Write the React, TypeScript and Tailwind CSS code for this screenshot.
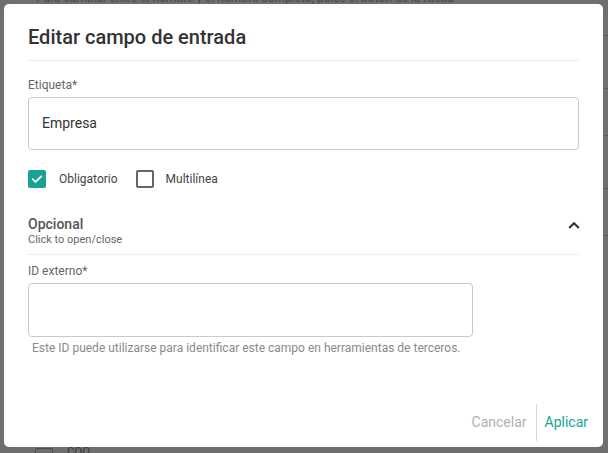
import React from "react";

export default function App() {
  const font = { fontFamily: "Roboto, 'Noto Sans', sans-serif" };
  return (
    <div className="relative w-[608px] h-[453px] overflow-hidden bg-[#6f6f6f]" style={font}>
      {/* background page (dimmed) */}
      <div className="absolute inset-0">
        <div className="absolute left-[36px] top-[-11px] text-[12px] text-[#4a4a4a] whitespace-nowrap">
          Para cambiar entre el nombre y el nombre completo, pulse el botón de la rueda
        </div>
        <div className="absolute right-0 top-[35px] w-[10px] h-px bg-[#5c5c5c]" />
        <div className="absolute right-0 top-[88px] w-[10px] h-px bg-[#5c5c5c]" />
        <div className="absolute right-0 top-[135px] w-[10px] h-px bg-[#5c5c5c]" />
        <div className="absolute right-0 top-[188px] w-[10px] h-px bg-[#5c5c5c]" />
        <div className="absolute right-0 top-[235px] w-[10px] h-px bg-[#5c5c5c]" />
        <div className="absolute left-[35px] top-[448px] w-[18px] h-[18px] border border-[#4a4a4a] rounded-[2px]" />
        <div className="absolute left-[67px] top-[440px] text-[14px] text-[#3f3f3f]">coo</div>
      </div>

      {/* modal */}
      <div className="absolute left-[4px] top-[4px] w-[599px] h-[443px] bg-white rounded-[5px] flex flex-col">
        <div className="px-6">
          <div className="pt-[19px] pb-[9px] border-b border-[#ececec]">
            <h1 className="text-[20px] leading-[28px] font-medium text-[#333]">Editar campo de entrada</h1>
          </div>

          <div className="mt-[16px] text-[12px] leading-[16px] text-[#666]">Etiqueta*</div>
          <div className="mt-[4px] h-[53px] border border-[#c9c9c9] rounded-[4px] flex items-center px-[13px] text-[14px] text-[#333]">
            Empresa
          </div>

          <div className="mt-[20px] flex items-center h-[18px]">
            <div className="w-[18px] h-[18px] rounded-[2px] bg-[#17a293] flex items-center justify-center">
              <svg width="14" height="14" viewBox="0 0 24 24" fill="none" stroke="white" strokeWidth="3" strokeLinecap="square">
                <path d="M5 12.5l4.5 4.5L19 7.5" />
              </svg>
            </div>
            <span className="ml-[13px] text-[12px] text-[#444]">Obligatorio</span>
            <div className="ml-[18px] w-[18px] h-[18px] rounded-[2px] border-2 border-[#666]" />
            <span className="ml-[12px] text-[12px] text-[#444]">Multilínea</span>
          </div>

          <div className="mt-[27px] flex items-start justify-between border-b border-[#ececec] pb-[7px]">
            <div>
              <div className="text-[14px] leading-[18px] font-medium text-[#555]">Opcional</div>
              <div className="text-[11px] leading-[14px] text-[#666]">Click to open/close</div>
            </div>
            <svg className="mt-[3px] mr-[-2px]" width="14" height="14" viewBox="0 0 24 24" fill="none" stroke="#333" strokeWidth="3.5" strokeLinecap="square">
              <path d="M5 16l7-7 7 7" />
            </svg>
          </div>

          <div className="mt-[8px] text-[12px] leading-[16px] text-[#666]">ID externo*</div>
          <div className="mt-[4px] w-[445px] h-[54px] border border-[#c9c9c9] rounded-[4px]" />
          <div className="mt-[4px] ml-[4px] text-[12px] leading-[14px] text-[#8a8a8a]">
            Este ID puede utilizarse para identificar este campo en herramientas de terceros.
          </div>
        </div>

        <div className="mt-auto mb-[6px] pr-[15px] flex items-center justify-end">
          <span className="text-[14px] text-[#b0b0b0] pr-[9px]">Cancelar</span>
          <div className="w-px h-[37px] bg-[#d8d8d8]" />
          <span className="text-[14px] text-[#17a293] pl-[8px]">Aplicar</span>
        </div>
      </div>
    </div>
  );
}
